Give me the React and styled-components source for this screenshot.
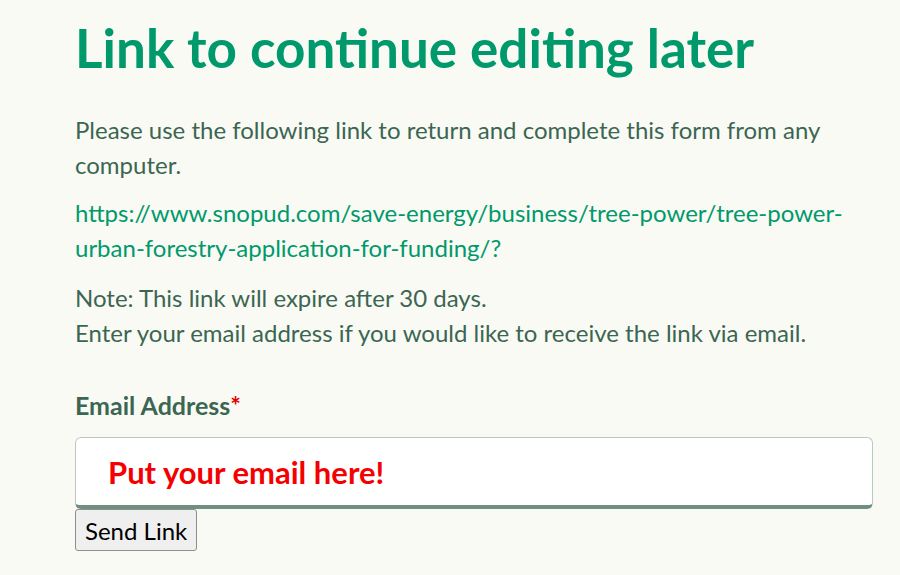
import React from "react";
import styled, { createGlobalStyle } from "styled-components";

const GlobalStyle = createGlobalStyle`
  html, body {
    margin: 0;
    padding: 0;
    background: #fafaf5;
  }
  body {
    font-family: Lato, "Open Sans", sans-serif;
  }
`;

const Page = styled.div`
  width: 900px;
  height: 575px;
  overflow: hidden;
  box-sizing: border-box;
  padding: 16px 26px 0 75px;
  background: #fafaf5;
`;

const Title = styled.h1`
  margin: 0 0 32px;
  font-size: 53px;
  line-height: 64px;
  font-weight: 700;
  color: #00996b;
`;

const Text = styled.p`
  margin: 0 0 ${(p) => p.$gap || 13}px;
  font-size: 24px;
  line-height: 35px;
  color: ${(p) => (p.$link ? "#00996b" : "#3b6652")};
`;

const Field = styled.div`
  margin-top: 40px;
  display: flex;
  flex-direction: column;
`;

const Label = styled.label`
  font-size: 25px;
  font-weight: 700;
  line-height: 30px;
  color: #3b6652;
  margin-bottom: 17px;
`;

const Required = styled.span`
  color: #e00000;
`;

const Input = styled.input`
  box-sizing: border-box;
  width: 798px;
  height: 72px;
  padding: 0 32px;
  border: 1px solid #b9c9c0;
  border-bottom: 4px solid #6f9080;
  border-radius: 6px;
  background: #fff;
  font-family: Lato, sans-serif;
  font-size: 31px;
  font-weight: 700;
  outline: none;

  &::placeholder {
    color: #f50000;
    opacity: 1;
  }
`;

const Button = styled.button`
  align-self: flex-start;
  box-sizing: border-box;
  height: 42px;
  padding: 0 9px;
  font-family: Lato, sans-serif;
  font-size: 24px;
  color: #000;
  background: #efefef;
  border: 1px solid #8f8f8f;
  border-radius: 3px;
`;

export default function App() {
  return (
    <>
      <GlobalStyle />
      <Page>
        <Title>Link to continue editing later</Title>
        <Text>
          Please use the following link to return and complete this form from any
          computer.
        </Text>
        <Text $link $gap={15}>
          https://www.snopud.com/save-energy/business/tree-power/tree-power-urban-forestry-application-for-funding/?
        </Text>
        <Text $gap={0}>
          Note: This link will expire after 30 days.
          <br />
          Enter your email address if you would like to receive the link via email.
        </Text>
        <Field>
          <Label>
            Email Address<Required>*</Required>
          </Label>
          <Input type="email" placeholder="Put your email here!" />
          <Button>Send Link</Button>
        </Field>
      </Page>
    </>
  );
}
